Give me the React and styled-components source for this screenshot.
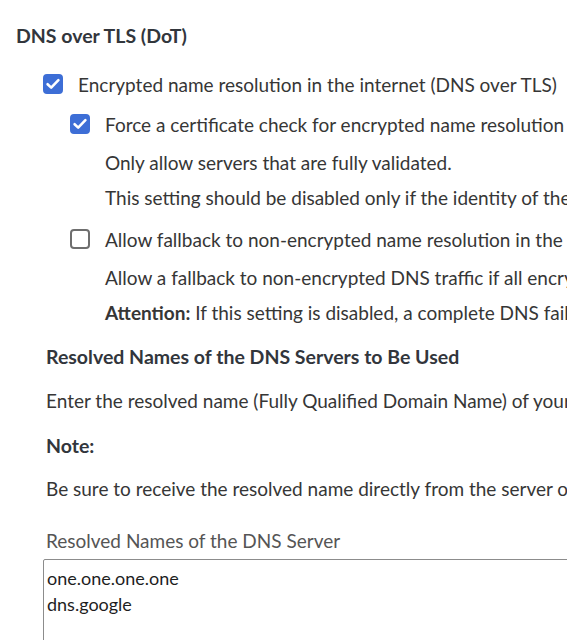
import React from "react";
import styled, { createGlobalStyle } from "styled-components";

const GlobalStyle = createGlobalStyle`
  html, body {
    margin: 0;
    padding: 0;
    background: #fff;
    overflow: hidden;
  }
  body {
    font-family: "Lato", "Open Sans", sans-serif;
    color: #363636;
  }
`;

const Page = styled.div`
  padding: 23px 0 0 16px;
  white-space: nowrap;
  overflow: hidden;
`;

const Title = styled.h2`
  margin: 0;
  font-size: 19.5px;
  line-height: 26px;
  font-weight: 700;
  color: #32363c;
`;

const Options = styled.div`
  padding-left: 27px;
  margin-top: 23px;
`;

const Nested = styled.div`
  padding-left: 27px;
`;

const CheckRow = styled.label`
  display: flex;
  align-items: center;
  gap: 15px;
  height: 24px;
  margin-top: ${(p) => p.$top || 0}px;
  font-size: 19px;
  cursor: pointer;
`;

const Box = styled.span`
  flex: none;
  width: 20px;
  height: 20px;
  box-sizing: border-box;
  border-radius: 4px;
  display: flex;
  align-items: center;
  justify-content: center;
  background: ${(p) => (p.$checked ? "#3d6ed6" : "#fff")};
  border: 2px solid ${(p) => (p.$checked ? "#3d6ed6" : "#6e6e6e")};
`;

const Hint = styled.p`
  margin: ${(p) => p.$top || 0}px 0 0 35px;
  font-size: 19px;
  line-height: 24px;
`;

const Block = styled.div`
  padding-left: 30px;
`;

const Heading = styled.h3`
  margin: ${(p) => p.$top || 0}px 0 0;
  font-size: 19.5px;
  line-height: 26px;
  font-weight: 700;
  color: #32363c;
`;

const Text = styled.p`
  margin: ${(p) => p.$top || 0}px 0 0;
  font-size: 19px;
  line-height: 24px;
`;

const FieldLabel = styled.div`
  margin-top: 28px;
  font-size: 19px;
  line-height: 24px;
  color: #555;
`;

const Area = styled.textarea`
  display: block;
  margin: 6px 0 0 -3px;
  width: 560px;
  height: 100px;
  box-sizing: border-box;
  padding: 5px 3px;
  border: 1px solid #8c8c8c;
  border-radius: 2px;
  font-family: "Lato", "Open Sans", sans-serif;
  font-size: 18px;
  line-height: 26px;
  color: #1e1e1e;
  resize: none;
  outline: none;
`;

const Check = ({ checked }) => (
  <Box $checked={checked}>
    {checked && (
      <svg width="16" height="16" viewBox="0 0 16 16">
        <path d="M2.6 8.2 L6.2 11.6 L13.4 4.2" fill="none" stroke="#fff" strokeWidth="2.6" strokeLinecap="round" strokeLinejoin="round" />
      </svg>
    )}
  </Box>
);

export default function App() {
  return (
    <>
      <GlobalStyle />
      <Page>
        <Title>DNS over TLS (DoT)</Title>
        <Options>
          <CheckRow>
            <Check checked />
            Encrypted name resolution in the internet (DNS over TLS)
          </CheckRow>
          <Nested>
            <CheckRow $top={16}>
              <Check checked />
              Force a certificate check for encrypted name resolution in the internet
            </CheckRow>
            <Hint $top={15}>Only allow servers that are fully validated.</Hint>
            <Hint $top={11}>This setting should be disabled only if the identity of the DNS server cannot be validated.</Hint>
            <CheckRow $top={17}>
              <Check />
              Allow fallback to non-encrypted name resolution in the internet
            </CheckRow>
            <Hint $top={15}>Allow a fallback to non-encrypted DNS traffic if all encrypted servers are unreachable.</Hint>
            <Hint $top={11}>
              <b>Attention:</b> If this setting is disabled, a complete DNS failure can occur.
            </Hint>
          </Nested>
        </Options>
        <Block>
          <Heading $top={19}>Resolved Names of the DNS Servers to Be Used</Heading>
          <Text $top={19}>Enter the resolved name (Fully Qualified Domain Name) of your DNS servers.</Text>
          <Heading $top={20}>Note:</Heading>
          <Text $top={18}>Be sure to receive the resolved name directly from the server operator.</Text>
          <FieldLabel>Resolved Names of the DNS Server</FieldLabel>
          <Area defaultValue={"one.one.one.one\ndns.google"} />
        </Block>
      </Page>
    </>
  );
}
